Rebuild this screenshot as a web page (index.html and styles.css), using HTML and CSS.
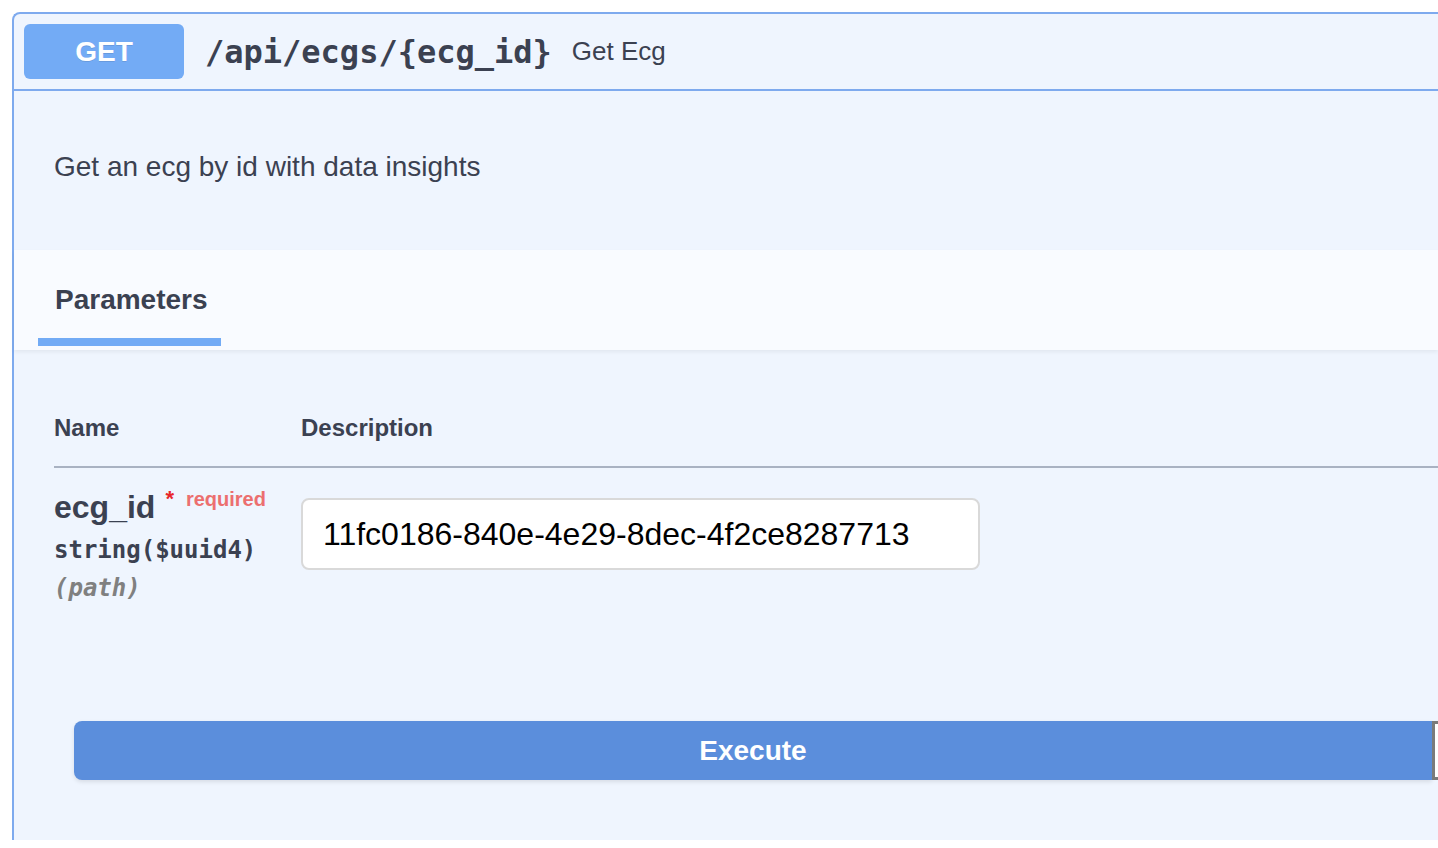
FILE: index.html
```html
<!DOCTYPE html>
<html lang="en">
<head>
<meta charset="utf-8">
<title>Get Ecg</title>
<link rel="stylesheet" href="styles.css">
</head>
<body>
<div class="page">
  <div class="opblock">
    <div class="opblock-summary">
      <span class="method">GET</span>
      <span class="path">/api/ecgs/{ecg_id}</span>
      <span class="summary">Get Ecg</span>
    </div>
    <div class="opblock-description">
      <p>Get an ecg by id with data insights</p>
    </div>
    <div class="tab-header">
      <div class="tab">
        <span class="tab-title">Parameters</span>
        <span class="tab-underline"></span>
      </div>
    </div>
    <div class="params">
      <div class="params-head">
        <div class="col-name">Name</div>
        <div class="col-desc">Description</div>
      </div>
      <div class="param-row">
        <div class="param-name-cell">
          <div class="param-name">ecg_id<span class="star">*</span><span class="required">required</span></div>
          <div class="param-type">string($uuid4)</div>
          <div class="param-in">(path)</div>
        </div>
        <div class="param-value-cell">
          <input class="param-input" type="text" value="11fc0186-840e-4e29-8dec-4f2ce8287713">
        </div>
      </div>
    </div>
    <div class="execute-wrapper">
      <button class="btn-execute">Execute</button>
      <button class="btn-clear"></button>
    </div>
  </div>
</div>
</body>
</html>
```

FILE: styles.css
```css
html, body {
  margin: 0;
  padding: 0;
  background: #ffffff;
  overflow: hidden;
  width: 1438px;
  height: 848px;
}

.page {
  padding: 12px 0 0 12px;
  font-family: "Liberation Sans", Arial, sans-serif;
  color: #3b4151;
}

.opblock {
  width: 1426px;
  background: #eff5fe;
  border: 2px solid #7eaaee;
  border-right: none;
  border-bottom: none;
  border-radius: 8px 0 0 0;
  box-sizing: border-box;
}

.opblock-summary {
  display: flex;
  align-items: center;
  padding: 10px;
  border-bottom: 2px solid #7eaaee;
}

.method {
  width: 160px;
  height: 55px;
  border-radius: 6px;
  background: #73abf5;
  color: #ffffff;
  font-weight: bold;
  font-size: 28px;
  display: flex;
  align-items: center;
  justify-content: center;
  text-shadow: 0 1px 0 rgba(0,0,0,0.1);
}

.path {
  font-family: "DejaVu Sans Mono", Menlo, monospace;
  font-weight: bold;
  font-size: 32px;
  margin-left: 21px;
  color: #3b4151;
}

.summary {
  font-size: 26px;
  margin-left: 20px;
  color: #3b4151;
}

.opblock-description {
  padding: 56px 40px 63px;
}

.opblock-description p {
  margin: 0;
  font-size: 28px;
  line-height: 40px;
}

.tab-header {
  height: 100px;
  background: #f9fbff;
  box-shadow: 0 2px 4px rgba(0,0,0,0.06);
  display: flex;
  align-items: flex-end;
  padding-left: 24px;
  box-sizing: border-box;
}

.tab {
  display: flex;
  flex-direction: column;
  padding-bottom: 4px;
}

.tab-title {
  font-weight: bold;
  font-size: 28px;
  line-height: 40px;
  padding: 0 17px;
}

.tab-underline {
  margin-top: 18px;
  height: 8px;
  width: 183px;
  background: #73abf5;
}

.params {
  padding: 0 0 0 40px;
}

.params-head {
  display: grid;
  grid-template-columns: 247px 1fr;
  padding: 63px 0 23px;
  border-bottom: 2px solid #a9b2c2;
  font-weight: bold;
  font-size: 24px;
  line-height: 30px;
}

.param-row {
  display: grid;
  grid-template-columns: 247px 1fr;
  padding-top: 19px;
}

.param-name {
  font-weight: bold;
  font-size: 32px;
  line-height: 40px;
  white-space: nowrap;
}

.star {
  color: #e8262a;
  font-size: 22px;
  position: relative;
  top: -12px;
  padding-left: 10px;
}

.required {
  color: #ec6f6f;
  font-size: 20px;
  position: relative;
  top: -12px;
  padding-left: 12px;
}

.param-type {
  font-family: "DejaVu Sans Mono", Menlo, monospace;
  font-weight: bold;
  font-size: 24px;
  line-height: 38px;
}

.param-in {
  font-family: "DejaVu Sans Mono", Menlo, monospace;
  font-weight: bold;
  font-style: italic;
  font-size: 24px;
  line-height: 38px;
  color: #808080;
}

.param-value-cell {
  padding-top: 11px;
}

.param-input {
  display: block;
  width: 679px;
  height: 72px;
  box-sizing: border-box;
  border: 2px solid #d9d9d9;
  border-radius: 8px;
  background: #ffffff;
  padding: 0 20px;
  margin: 0;
  font-family: "Liberation Sans", Arial, sans-serif;
  font-size: 32px;
  color: #000000;
  outline: none;
}

.execute-wrapper {
  display: flex;
  padding: 114px 0 60px 60px;
}

.btn-execute {
  flex: 0 0 1358px;
  height: 59px;
  border: none;
  border-radius: 8px 0 0 8px;
  background: #5b8edc;
  color: #ffffff;
  font-family: "Liberation Sans", Arial, sans-serif;
  font-weight: bold;
  font-size: 28px;
  box-shadow: 0 2px 4px rgba(0,0,0,0.1);
  margin: 0;
  padding: 0;
}

.btn-clear {
  flex: 0 0 6px;
  height: 59px;
  border: 3px solid #7b7b7b;
  border-right: none;
  background: #ffffff;
  margin: 0;
  padding: 0;
  box-sizing: border-box;
}
```
